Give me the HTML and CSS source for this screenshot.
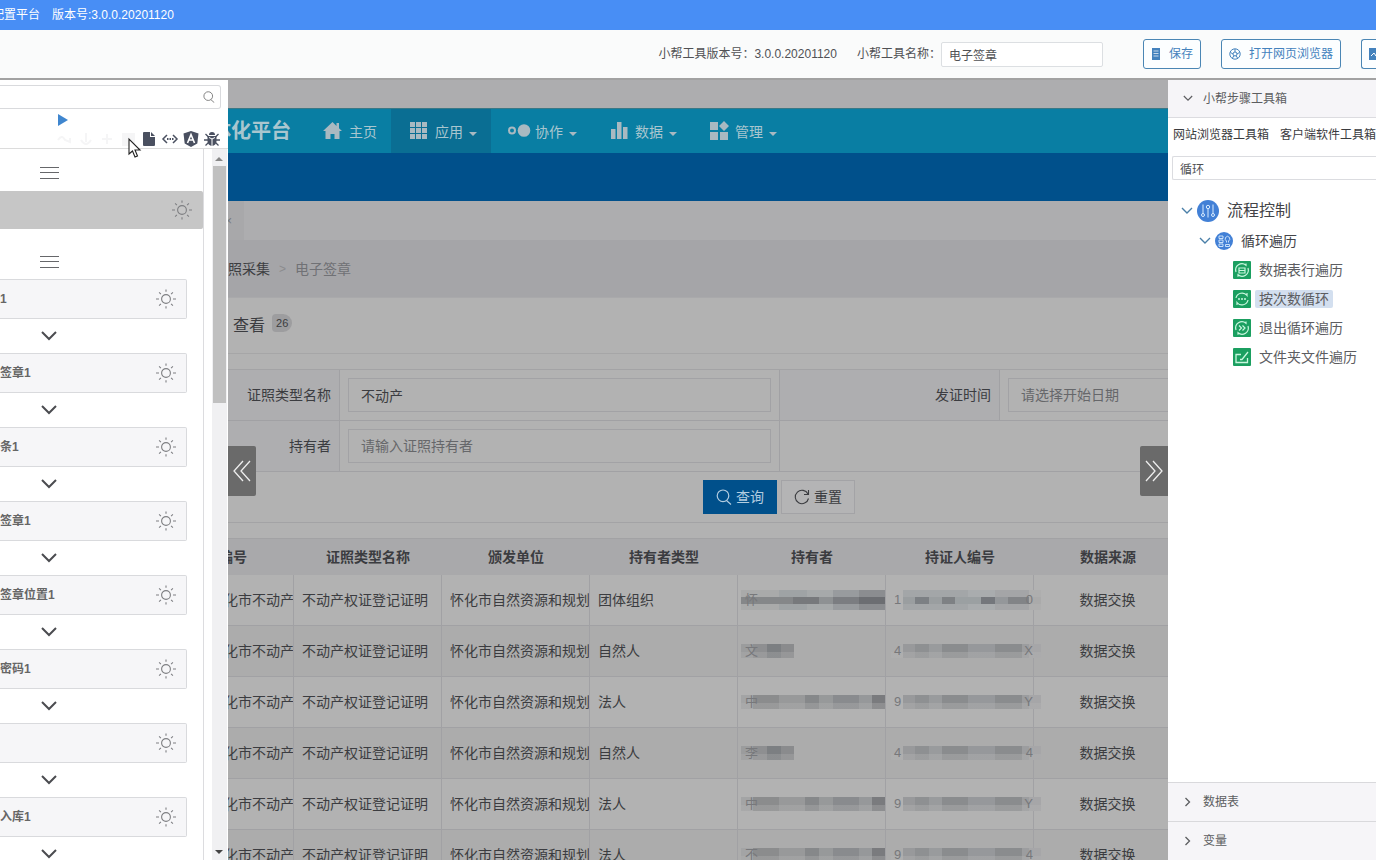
FILE: index.html
```html
<!DOCTYPE html>
<html lang="zh-CN">
<head>
<meta charset="utf-8">
<title>配置平台</title>
<link rel="stylesheet" href="styles.css">
</head>
<body>
<svg class="defs" aria-hidden="true">
  <symbol id="sun" viewBox="0 0 20 20"><g fill="none" stroke="currentColor" stroke-width="1.1"><circle cx="10" cy="10" r="4.4"/><path d="M10 .5v2.3M10 17.2v2.3M0 10h3M17 10h3M3.1 3.4l1.8 1.7M15.1 14.9l1.8 1.7M16.9 3.4l-1.8 1.7M4.9 14.9l-1.8 1.7"/></g></symbol>
  <symbol id="menu" viewBox="0 0 20 12"><path d="M0 .5h19M0 5.5h19M0 11.5h19" stroke="currentColor" fill="none"/></symbol>
  <symbol id="down" viewBox="0 0 16 10"><path d="M1 1l7 7 7-7" fill="none" stroke="currentColor" stroke-width="2"/></symbol>
  <symbol id="thin-down" viewBox="0 0 12 8"><path d="M1 1l5 5 5-5" fill="none" stroke="currentColor" stroke-width="1.4"/></symbol>
  <symbol id="thin-right" viewBox="0 0 8 12"><path d="M1.500 2l4 4-4 4" fill="none" stroke="currentColor" stroke-width="1.300"/></symbol>
  <symbol id="caret" viewBox="0 0 8 4"><path d="M0 0h8L4 4z" fill="currentColor"/></symbol>
  <symbol id="lens" viewBox="0 0 16 16"><g fill="none" stroke="currentColor" stroke-width="1.200"><circle cx="7" cy="6.800" r="5.800"/><path d="M10.500 11.500l4.500 4"/></g></symbol>
</svg>

<header class="titlebar"><span class="product">配置平台</span><span>版本号:3.0.0.20201120</span></header>

<div class="toolbar">
  <span>小帮工具版本号：3.0.0.20201120</span>
  <label class="tool-name">小帮工具名称：<input type="text" value="电子签章"></label>
  <button class="outline-btn"><svg width="10" height="12" viewBox="0 0 10 12"><path d="M1 0h8v12H1z" fill="currentColor"/><path d="M2.500 3h5M2.500 5.500h5M2.500 8h5" stroke="#fff" stroke-width=".7"/></svg>保存</button>
  <button class="outline-btn"><svg width="12" height="12" viewBox="0 0 12 12"><g fill="none" stroke="currentColor"><circle cx="6" cy="6" r="5.200"/><circle cx="6" cy="6" r="2"/><path d="M6 1v3M10.500 4.500L8 6M8.500 10L7 7.500M3.500 10L5 7.500M1.500 4.500L4 6"/></g></svg>打开网页浏览器</button>
  <button class="outline-btn cut" aria-label="更多"><svg width="12" height="12" viewBox="0 0 12 12"><path d="M0 0h12v12H0z" fill="currentColor"/><path d="M2 8l3-3 2 3 3-4" stroke="#fff" fill="none"/></svg></button>
</div>

<main class="workspace">
  <aside class="flow-panel">
    <div class="flow-search"><input type="text" aria-label="搜索步骤"><svg width="12" height="12"><use href="#lens"/></svg></div>
    <div class="flow-run"><svg width="10" height="12" viewBox="0 0 10 12"><path d="M0 0l10 6-10 6z" fill="currentColor"/></svg></div>
    <div class="flow-tools">
      <svg class="faint" width="16" height="16" viewBox="0 0 16 16"><path d="M1 9q4-6 7 0l5 2V7" fill="none" stroke="currentColor" stroke-width="2"/></svg>
      <svg class="faint" width="16" height="16" viewBox="0 0 16 16"><path d="M8 2v9M3 9q5 8 10 0" fill="none" stroke="currentColor" stroke-width="2"/></svg>
      <svg class="faint" width="16" height="16" viewBox="0 0 16 16"><path d="M8 3v10M3 8h10" fill="none" stroke="currentColor" stroke-width="2"/></svg>
      <svg class="faint" width="16" height="16" viewBox="0 0 16 16"><path d="M2 2h13v13H2z" fill="currentColor"/></svg>
      <svg width="16" height="16" viewBox="0 0 16 16"><path d="M2 2q0-1 1-1h6v5h5v8q0 1-1 1H3q-1 0-1-1zM10 1l4 4h-4z" fill="currentColor"/></svg>
      <svg width="16" height="16" viewBox="0 0 16 16"><path d="M5 4L1 8l4 4M11 4l4 4-4 4" fill="none" stroke="currentColor" stroke-width="1.500"/><path d="M5 7h1.500v2H5zM7.500 7H9v2H7.500zM10 7h1.500v2H10z" fill="currentColor"/></svg>
      <svg width="16" height="16" viewBox="0 0 16 16"><path d="M8 0l7.500 2.500-1.200 10L8 16l-6.300-3.500L.5 2.500z" fill="currentColor"/><path d="M4.500 12L8 3.500 11.500 12M5.800 9h4.400" fill="none" stroke="#fff" stroke-width="1.600"/></svg>
      <svg width="16" height="16" viewBox="0 0 16 16"><path d="M5 4a3 3 0 0 1 6 0z" fill="currentColor"/><path d="M3.500 5h9v5a4.500 5 0 0 1-9 0z" fill="currentColor"/><path d="M1.500 3l3 3M14.500 3l-3 3M0 9h4M12 9h4M1.500 14.500l3-3M14.500 14.500l-3-3" stroke="currentColor" stroke-width="1.300"/><path d="M8 7.500V15M5 6.500l3 1.500 3-1.500" stroke="#fff" fill="none"/></svg>
    </div>
    <div class="flow-body">
      <div class="flow-list">
        <div class="grip first"><svg width="20" height="12"><use href="#menu"/></svg></div>
        <div class="step selected"><svg width="20" height="20"><use href="#sun"/></svg></div>
        <div class="grip second"><svg width="20" height="12"><use href="#menu"/></svg></div>
        <div class="step"><span>1</span><svg width="20" height="20"><use href="#sun"/></svg></div>
        <div class="arrow"><svg width="16" height="10"><use href="#down"/></svg></div>
        <div class="step"><span>签章1</span><svg width="20" height="20"><use href="#sun"/></svg></div>
        <div class="arrow"><svg width="16" height="10"><use href="#down"/></svg></div>
        <div class="step"><span>条1</span><svg width="20" height="20"><use href="#sun"/></svg></div>
        <div class="arrow"><svg width="16" height="10"><use href="#down"/></svg></div>
        <div class="step"><span>签章1</span><svg width="20" height="20"><use href="#sun"/></svg></div>
        <div class="arrow"><svg width="16" height="10"><use href="#down"/></svg></div>
        <div class="step"><span>签章位置1</span><svg width="20" height="20"><use href="#sun"/></svg></div>
        <div class="arrow"><svg width="16" height="10"><use href="#down"/></svg></div>
        <div class="step"><span>密码1</span><svg width="20" height="20"><use href="#sun"/></svg></div>
        <div class="arrow"><svg width="16" height="10"><use href="#down"/></svg></div>
        <div class="step"><span></span><svg width="20" height="20"><use href="#sun"/></svg></div>
        <div class="arrow"><svg width="16" height="10"><use href="#down"/></svg></div>
        <div class="step"><span>入库1</span><svg width="20" height="20"><use href="#sun"/></svg></div>
        <div class="arrow"><svg width="16" height="10"><use href="#down"/></svg></div>
      </div>
      <div class="scrollbar">
        <svg width="8" height="4" viewBox="0 0 8 4"><path d="M0 4h8L4 0z" fill="currentColor"/></svg>
        <div class="thumb"></div>
        <svg class="dn" width="8" height="4"><use href="#caret"/></svg>
      </div>
    </div>
    <svg class="pointer" width="14" height="20" viewBox="0 0 14 20"><path d="M1 1v15l3.500-3 2.500 6 2.500-1-2.500-6h5z" fill="#fff" stroke="#222" stroke-width="1.100"/></svg>
  </aside>

  <section class="browser">
    <div class="page-top"></div>
    <nav class="site-nav">
      <span class="brand">体化平台</span>
      <a href="#"><svg width="22" height="18" viewBox="0 0 22 18"><path d="M9.500 0L0 9h2.500v8h5v-5h4v5h5V9H19l-3-2.800V1h-2.500v3z" fill="currentColor"/></svg><span>主页</span></a>
      <a href="#" class="active"><svg width="22" height="18" viewBox="0 0 22 18"><path d="M1 0h5v5H1zM7 0h5v5H7zM13 0h5v5h-5zM1 6h5v5H1zM7 6h5v5H7zM13 6h5v5h-5zM1 12h5v5H1zM7 12h5v5H7zM13 12h5v5h-5z" fill="currentColor"/></svg><span>应用</span><svg class="caret" width="8" height="4"><use href="#caret"/></svg></a>
      <a href="#"><svg width="22" height="18" viewBox="0 0 22 18"><circle cx="3" cy="8.500" r="3" fill="none" stroke="currentColor" stroke-width="2"/><circle cx="15" cy="8.500" r="6.300" fill="currentColor"/></svg><span>协作</span><svg class="caret" width="8" height="4"><use href="#caret"/></svg></a>
      <a href="#"><svg width="22" height="18" viewBox="0 0 22 18"><path d="M2 7h4.500v10H2zM8 0h4.500v17H8zM14 5h4.500v12H14z" fill="currentColor"/></svg><span>数据</span><svg class="caret" width="8" height="4"><use href="#caret"/></svg></a>
      <a href="#"><svg width="22" height="19" viewBox="0 0 22 19"><path d="M1 0h8v8H1zM1 10h8v8H1zM11 10h8v8h-8zM15 -1l5 5-5 5-5-5z" fill="currentColor"/></svg><span>管理</span><svg class="caret" width="8" height="4"><use href="#caret"/></svg></a>
    </nav>
    <div class="blue-band"></div>
    <div class="tabs"><button class="tab-close" aria-label="关闭">×</button></div>
    <div class="crumbs"><a href="#">照采集</a><span class="sep">&gt;</span><span>电子签章</span></div>
    <h2 class="view-title">查看 <span class="count">26</span></h2>
    <form class="filters">
      <label for="kind">证照类型名称</label>
      <div class="field"><input id="kind" type="text" value="不动产"></div>
      <label for="issued">发证时间</label>
      <div class="field open"><input id="issued" type="text" placeholder="请选择开始日期"></div>
      <label for="holder">持有者</label>
      <div class="field"><input id="holder" type="text" placeholder="请输入证照持有者"></div>
      <div class="blank"></div>
      <div class="actions">
        <button type="button" class="query"><svg width="16" height="16"><use href="#lens"/></svg>查询</button>
        <button type="button" class="reset"><svg width="16" height="16" viewBox="0 0 16 16"><path d="M14.500 9.500A6.700 6.700 0 1 1 14 5M14.500 1v4.500H10" fill="none" stroke="currentColor" stroke-width="1.100"/></svg>重置</button>
      </div>
    </form>
    <table class="records">
      <colgroup><col class="first"><col><col><col><col><col><col></colgroup>
      <thead><tr><th class="num">编号</th><th>证照类型名称</th><th>颁发单位</th><th>持有者类型</th><th>持有者</th><th>持证人编号</th><th>数据来源</th></tr></thead>
      <tbody>
        <tr><td class="num">怀化市不动产</td><td>不动产权证登记证明</td><td>怀化市自然资源和规划</td><td>团体组织</td><td class="masked"><span class="mask name tall">怀</span></td><td class="masked id"><span class="mask code tall"><i>1</i><i>0</i></span></td><td class="mid">数据交换</td></tr>
        <tr><td class="num">怀化市不动产</td><td>不动产权证登记证明</td><td>怀化市自然资源和规划</td><td>自然人</td><td class="masked"><span class="mask name short">文</span></td><td class="masked id"><span class="mask code"><i>4</i><i>X</i></span></td><td class="mid">数据交换</td></tr>
        <tr><td class="num">怀化市不动产</td><td>不动产权证登记证明</td><td>怀化市自然资源和规划</td><td>法人</td><td class="masked"><span class="mask name">中</span></td><td class="masked id"><span class="mask code"><i>9</i><i>Y</i></span></td><td class="mid">数据交换</td></tr>
        <tr><td class="num">怀化市不动产</td><td>不动产权证登记证明</td><td>怀化市自然资源和规划</td><td>自然人</td><td class="masked"><span class="mask name short">李</span></td><td class="masked id"><span class="mask code"><i>4</i><i>4</i></span></td><td class="mid">数据交换</td></tr>
        <tr><td class="num">怀化市不动产</td><td>不动产权证登记证明</td><td>怀化市自然资源和规划</td><td>法人</td><td class="masked"><span class="mask name">中</span></td><td class="masked id"><span class="mask code"><i>9</i><i>Y</i></span></td><td class="mid">数据交换</td></tr>
        <tr><td class="num">怀化市不动产</td><td>不动产权证登记证明</td><td>怀化市自然资源和规划</td><td>法人</td><td class="masked"><span class="mask name">不</span></td><td class="masked id"><span class="mask code"><i>9</i><i>4</i></span></td><td class="mid">数据交换</td></tr>
      </tbody>
    </table>
    <button class="collapse left" aria-label="收起左侧"><svg width="20" height="22" viewBox="0 0 20 22"><path d="M11 1L2 11l9 10M18 1L9 11l9 10" fill="none" stroke="currentColor" stroke-width="1.300"/></svg></button>
    <button class="collapse right" aria-label="收起右侧"><svg width="20" height="22" viewBox="0 0 20 22"><path d="M9 1l9 10L9 21M2 1l9 10-9 10" fill="none" stroke="currentColor" stroke-width="1.300"/></svg></button>
  </section>

  <aside class="toolbox">
    <button class="section-head"><svg width="10" height="7"><use href="#thin-down"/></svg>小帮步骤工具箱</button>
    <div class="box-tabs"><a href="#">网站浏览器工具箱</a><a href="#">客户端软件工具箱</a></div>
    <input class="box-search" type="text" aria-label="搜索工具" value="循环">
    <ul class="tree">
      <li class="lvl1"><svg class="chev" width="12" height="8"><use href="#thin-down"/></svg><svg width="22" height="22" viewBox="0 0 22 22"><circle cx="11" cy="11" r="11" fill="#4280d6"/><g fill="none" stroke="#d7ebff"><path d="M6 4.500v9M11 9v8.500M16 4.500v9"/><circle cx="6" cy="15" r="1.500"/><circle cx="11" cy="7" r="1.700"/><circle cx="16" cy="15" r="1.500"/></g></svg><span>流程控制</span></li>
      <li class="lvl2"><svg class="chev" width="12" height="8"><use href="#thin-down"/></svg><svg width="18" height="18" viewBox="0 0 18 18"><circle cx="9" cy="9" r="9" fill="#4280d6"/><g fill="none" stroke="#d7ebff" stroke-width=".9"><path d="M4 4h4v2.500H4zM4 8h4v2.500H4zM4 12h4v2.500H4zM10.500 12.500h4v2h-4zM11.500 10.500v-1.500q-2-1-1-3.500 2-2.500 4 0 1 2.500-1 3.500v1.500"/></g></svg><span>循环遍历</span></li>
      <li class="lvl3"><svg width="18" height="18" viewBox="0 0 18 18"><rect width="18" height="18" rx="1" fill="#1b9f60"/><g fill="none" stroke="#c9f7de" stroke-width="1.200"><path d="M3 11a6.300 6.300 0 0 1 10-6.800V2.500M15 7a6.300 6.300 0 0 1-10 6.800v2"/><path d="M6 7h6v5H6zM6 9.500h6"/></g></svg><span>数据表行遍历</span></li>
      <li class="lvl3 picked"><svg width="18" height="18" viewBox="0 0 18 18"><rect width="18" height="18" rx="1" fill="#1b9f60"/><g fill="none" stroke="#c9f7de" stroke-width="1.200"><path d="M3 8a6.200 6.200 0 0 1 11-2.500V3M15 10a6.200 6.200 0 0 1-11 2.500V15"/><path d="M5 9h2M8 9h2M11 9h2" stroke-width="1.500"/></g></svg><span>按次数循环</span></li>
      <li class="lvl3"><svg width="18" height="18" viewBox="0 0 18 18"><rect width="18" height="18" rx="1" fill="#1b9f60"/><g fill="none" stroke="#c9f7de" stroke-width="1.200"><path d="M3 11a6.300 6.300 0 0 1 10-6.800V2.500M15 7a6.300 6.300 0 0 1-10 6.800v2"/><path d="M6 6.500L8.500 9 6 11.500M9.500 6.500L12 9l-2.500 2.500"/></g></svg><span>退出循环遍历</span></li>
      <li class="lvl3"><svg width="18" height="18" viewBox="0 0 18 18"><rect width="18" height="18" rx="1" fill="#1b9f60"/><path d="M8 6.500H3v8h11.500V10M7 11.500h2L15 4" fill="none" stroke="#c9f7de" stroke-width="1.300"/></svg><span>文件夹文件遍历</span></li>
    </ul>
    <button class="section-head closed"><svg width="10" height="12" viewBox="0 0 10 12"><use href="#thin-right"/></svg>数据表</button>
    <button class="section-head closed"><svg width="10" height="12" viewBox="0 0 10 12"><use href="#thin-right"/></svg>变量</button>
  </aside>
</main>
</body>
</html>
```

FILE: styles.css
```css
* { box-sizing: border-box; }
body {
  margin: 0;
  height: 100vh;
  display: flex;
  flex-direction: column;
  overflow: hidden;
  font: 12px/18px "Liberation Sans", "Noto Sans CJK SC", sans-serif;
  color: #505154;
}
button, input { font: inherit; color: inherit; }
input { min-width: 0; outline: 0; }
button { cursor: pointer; }
a { color: inherit; text-decoration: none; }
svg { flex: none; overflow: visible; }
.defs { position: absolute; width: 0; height: 0; }

.titlebar {
  flex: none;
  height: 30px;
  display: flex;
  align-items: center;
  gap: 12px;
  background: #488ef5;
  color: #fff;
  white-space: nowrap;
  overflow: hidden;
}
.product { width: 40px; display: flex; justify-content: flex-end; }
.toolbar {
  flex: none;
  height: 50px;
  display: flex;
  align-items: center;
  justify-content: flex-end;
  gap: 20px;
  background: #fafbfb;
  border-bottom: 2px solid #a2a2a2;
  white-space: nowrap;
}
.tool-name { display: flex; align-items: center; margin-right: 20px; }
.tool-name input {
  width: 162px;
  height: 25px;
  padding: 0 7px;
  border: 1px solid #dcdfe2;
  border-radius: 2px;
  background: #fff;
}
.outline-btn {
  height: 30px;
  display: flex;
  align-items: center;
  gap: 8px;
  padding: 0 7px;
  border: 1px solid #4b86b4;
  border-radius: 3px;
  background: #fcfeff;
  color: #4482bd;
}
.outline-btn.cut { width: 15px; padding-right: 0; border-right: 0; border-radius: 3px 0 0 3px; overflow: hidden; }

.workspace { flex: 1; min-height: 0; display: flex; }

.flow-panel {
  position: relative;
  flex: none;
  width: 228px;
  display: flex;
  flex-direction: column;
  background: #fff;
}
.flow-search {
  display: flex;
  align-items: center;
  height: 24px;
  margin: 5px 7px 0 0;
  padding-right: 5px;
  border: 1px solid #d9dadd;
  border-left: 0;
  border-radius: 0 3px 3px 0;
  color: #777;
}
.flow-search input { flex: 1; border: 0; background: none; }
.flow-run { display: flex; height: 22px; padding: 5px 0 0 58px; color: #3f86cf; }
.flow-tools {
  flex: none;
  display: flex;
  justify-content: flex-end;
  gap: 5px;
  height: 18px;
  padding-right: 8px;
  border-bottom: 1px solid #dcdcdc;
  color: #4a5060;
}
.faint { color: #f5f5f6; }
.pointer { position: absolute; left: 128px; top: 58px; }
.flow-body { flex: 1; min-height: 0; display: flex; justify-content: space-between; }
.flow-list { width: 204px; border-right: 1px solid #dcdcdf; overflow: hidden; }
.grip { display: flex; padding-left: 40px; color: #66676a; }
.grip.first { height: 42px; padding-top: 18px; }
.grip.second { height: 50px; padding-top: 27px; }
.step {
  display: flex;
  align-items: center;
  justify-content: space-between;
  width: 187px;
  height: 40px;
  padding-right: 10px;
  background: #f6f6f8;
  border: 1px solid #d9dadd;
  border-left: 0;
  border-radius: 0 2px 2px 0;
  font-weight: 700;
  color: #666;
}
.step.selected { width: 100%; height: 38px; justify-content: flex-end; background: #c6c6c6; border-color: #c6c6c6; }
.step svg { color: #7e7f82; }
.arrow { height: 34px; padding: 12px 0 0 41px; display: flex; color: #4b4c50; }
.scrollbar {
  width: 16px;
  display: flex;
  flex-direction: column;
  align-items: center;
  padding: 8px 2px 6px 0;
  background: linear-gradient(90deg, #f0f0f2 15px, #fff 15px);
  color: #888;
}
.thumb { width: 13px; height: 34%; margin: 5px 0 auto; background: #c0c0c0; }
.scrollbar .dn { color: #444; }

.browser {
  position: relative;
  flex: 1;
  min-width: 0;
  display: flex;
  flex-direction: column;
  overflow: hidden;
  background: #b2b2b2;
  font-size: 14px;
  line-height: 20px;
  color: #3b3c40;
}
.page-top { flex: none; height: 28px; background: #adadaf; }
.site-nav {
  flex: none;
  display: flex;
  height: 45px;
  background: #097ea3;
  border-top: 1px solid #397886;
  color: #a9c6cf;
  white-space: nowrap;
}
.site-nav svg { color: #a9b9c1; }
.brand {
  width: 77px;
  padding-right: 14px;
  display: flex;
  justify-content: flex-end;
  align-items: center;
  font-size: 20px;
  font-weight: 700;
}
.site-nav a { display: flex; align-items: center; gap: 4px; padding: 0 14px 0 18px; }
.site-nav a span { padding-top: 2px; }
.site-nav .active { background: #0a6e93; }
.site-nav .caret { margin: 6px 0 0 2px; }
.blue-band { flex: none; height: 48px; background: #00508b; }
.tabs { flex: none; height: 39px; background: #adadaf; }
.tab-close { width: 16px; height: 100%; padding: 0; border: 0; background: #a8a8aa; color: #77787b; font-size: 12px; text-align: left; text-indent: -3px; overflow: hidden; }
.crumbs { flex: none; display: flex; align-items: center; height: 58px; background: #a5a5a8; border-bottom: 1px solid #a9a9ab; color: #707175; }
.crumbs a { color: #3d3e41; }
.sep { padding: 0 9px; font-size: 12px; color: #8b8b8e; }
.view-title {
  flex: none;
  display: flex;
  align-items: center;
  gap: 7px;
  height: 56px;
  margin: 0;
  padding-left: 5px;
  border-bottom: 1px solid #a6a6a7;
  font-size: 16px;
  font-weight: 400;
}
.count { align-self: flex-start; margin-top: 16px; padding: 0 4px; border-radius: 4px 9px 9px 4px; background: #9d9d9f; font-size: 11px; line-height: 18px; }
.filters {
  flex: none;
  display: grid;
  grid-template-columns: 112px 440px minmax(0, 1fr) 168px;
  margin: 15px 0;
  border-top: 1px solid #a3a3a5;
}
.filters label {
  display: flex;
  align-items: center;
  justify-content: flex-end;
  padding-right: 8px;
  background: #aeaeb0;
  border-right: 1px solid #a1a1a4;
  border-bottom: 1px solid #a1a1a4;
}
.field { height: 51px; padding: 8px; border-right: 1px solid #a1a1a4; border-bottom: 1px solid #a1a1a4; }
.field input { width: 100%; height: 34px; padding: 0 12px; border: 1px solid #a2a2a5; background: transparent; }
.field input::placeholder { color: #66676a; opacity: 1; }
.field.open { padding-right: 0; border-right: 0; }
.field.open input { border-right: 0; }
.blank { grid-column: span 2; border-bottom: 1px solid #a1a1a4; }
.actions { grid-column: 1 / -1; display: flex; justify-content: center; gap: 4px; height: 51px; padding: 8px 0 8px 162px; border-bottom: 1px solid #a3a3a5; }
.actions button { display: flex; align-items: center; justify-content: center; gap: 4px; width: 74px; height: 34px; padding: 0; border: 1px solid #a3a3a6; background: #b4b4b5; }
.actions .query { border-color: #00508b; background: #00508b; color: #b3cde0; }

.records { flex: none; align-self: flex-start; width: 953px; table-layout: fixed; border-collapse: separate; border-spacing: 0; white-space: nowrap; }
.records col { width: 148px; }
.records col.first { width: 66px; }
.records th { height: 37px; padding: 0; background: #a9a9ab; border-top: 1px solid #a2a2a4; font-weight: 700; }
.records td { height: 51px; padding: 0 0 0 8px; border-right: 1px solid #a1a1a4; border-bottom: 1px solid #a1a1a4; overflow: hidden; }
.records tr:nth-child(even) td { background: #acacac; }
.records th.num { padding-right: 47px; direction: rtl; overflow: hidden; }
.records td.num { padding: 0; direction: rtl; }
.records td.mid { padding: 0; text-align: center; }
.records td.masked { padding: 0 0 0 3px; overflow: visible; }
.records td.masked.id { padding-left: 5px; }
.mask { position: relative; display: flex; align-items: center; height: 14px; padding-left: 4px; font-size: 13px; color: #77787b; }
.mask i { font-style: normal; }
.name { background: linear-gradient(transparent 8px, rgba(178, 178, 178, .35) 8px), linear-gradient(90deg, #a3a4a5 12px, #8b8c8d 12px 38px, #98999a 38px 64px, #86888a 64px 78px, #97999a 78px 92px, #898b8e 92px 118px, #96989a 118px 131px, #7a7b7e 131px); }
.name.short { width: 53px; background: linear-gradient(transparent 8px, rgba(178, 178, 178, .3) 8px), linear-gradient(90deg, #9b9c9d 12px, #8e8f91 12px 26px, #7c7f82 26px 40px, #8a8b8d 40px); }
.code { justify-content: space-between; width: 150px; padding: 0 8px 0 3px; background: linear-gradient(transparent 8px, rgba(178, 178, 178, .4) 8px), linear-gradient(90deg, transparent 12px, #98999b 12px 24px, #8e9092 24px 38px, #999b9d 38px 51px, #8a8c8e 51px 77px, #96989b 77px 104px, #8a8c8e 104px 131px, #9c9d9f 131px 138px, #a6a6a8 138px); }
.tall { height: 20px; }
.name.tall { background: linear-gradient(90deg, #858789 52px, #77797c 52px 78px, #8e9193 78px 92px, #7b7d81 92px 118px, #6c6e72 118px) 0 7px / 100% 7px no-repeat, linear-gradient(90deg, #a9aaaa 38px, #9fa3a5 38px 66px, #a6a9aa 66px 92px, #989b9e 92px 118px, #8b8d90 118px); }
.code.tall { background: linear-gradient(90deg, transparent 12px, #9a9ea0 12px 24px, #7c8084 24px 38px, #9a9ea0 38px 51px, #7e8184 51px 64px, #9ba0a2 64px 90px, #74777c 90px 104px, #94979a 104px 117px, #828487 117px 138px, #aaa 138px) 0 7px / 100% 7px no-repeat, linear-gradient(90deg, transparent 12px, #a3a6a8 12px 77px, #a9acae 77px 104px, #a4a5a7 104px 138px, #aeaeae 138px); }

.collapse {
  position: absolute;
  top: 366px;
  width: 28px;
  height: 50px;
  display: flex;
  align-items: center;
  justify-content: center;
  padding: 0;
  border: 0;
  background: #6a6a6a;
  color: #eee;
}
.collapse.left { left: 0; border-radius: 0 2px 2px 0; }
.collapse.right { right: 0; border-radius: 2px 0 0 2px; }

.toolbox { flex: none; width: 208px; display: flex; flex-direction: column; background: #fff; overflow: hidden; white-space: nowrap; }
.section-head {
  flex: none;
  display: flex;
  align-items: center;
  gap: 10px;
  height: 38px;
  padding: 0 15px;
  border: 0;
  border-bottom: 1px solid #dcdce0;
  background: #f6f5f8;
  color: #5c5d60;
}
.section-head.closed { height: 39px; border-bottom: 0; border-top: 1px solid #d9d9dc; }
.box-tabs { flex: none; display: flex; gap: 11px; height: 38px; align-items: center; padding: 0 0 5px 5px; color: #3a3b3e; }
.box-search { flex: none; height: 24px; margin-left: 4px; padding: 0 7px; border: 1px solid #dbdce0; border-right: 0; border-radius: 2px 0 0 2px; }
.tree { flex: 1; min-height: 0; margin: 0; padding: 15px 0 0; list-style: none; font-size: 14px; line-height: 18px; }
.tree li { display: flex; align-items: center; gap: 4px; height: 29px; color: #5c5d61; }
.tree .lvl1 { height: 31px; padding-left: 13px; font-size: 16px; color: #434448; }
.tree .lvl2 { padding-left: 31px; color: #434448; }
.tree .lvl3 { padding-left: 65px; }
.tree span { padding: 0 4px; border-radius: 2px; }
.tree .lvl1 span, .tree .lvl2 span { padding-right: 0; }
.picked span { background: #d3dfef; }
.chev { color: #4a7fa8; }
```
